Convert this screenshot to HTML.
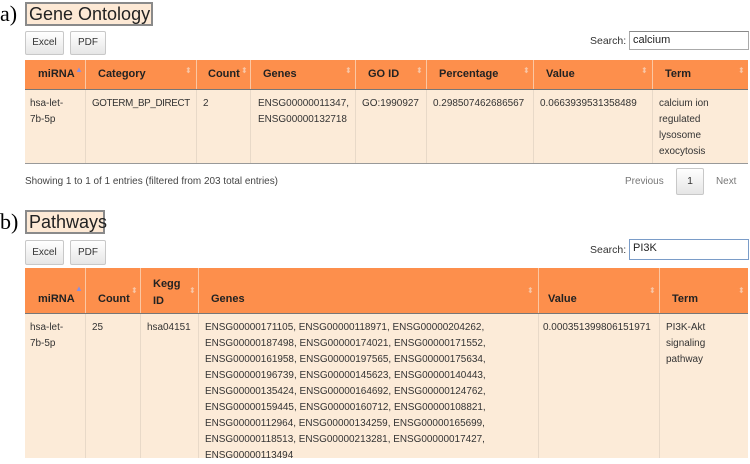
<!DOCTYPE html>
<html><head><meta charset="utf-8"><style>
*{margin:0;padding:0;box-sizing:border-box}
body{width:750px;height:458px;background:#fff;position:relative;overflow:hidden;font-family:"Liberation Sans",sans-serif;font-size:9.95px;color:#333}
.a{position:absolute;white-space:nowrap}
.lab{font-family:"Liberation Serif",serif;font-size:22px;color:#000}
.ttl{background:#fde9d5;border:2px solid #8a8a8a;font-size:18px;color:#222;line-height:20px;padding:0 2px}
.btn{background:linear-gradient(#fff,#e6e6e6);border:1px solid #c8c8c8;border-radius:2px;font-size:10px;text-align:center;color:#333}
.inp{border:1px solid #aaa;border-top-color:#888;background:#fff;font-size:11px;padding:2px 3px;color:#222}
.hd{background:#fd8f4c}
.th{position:absolute;font-weight:bold;color:#222;font-size:11px;white-space:nowrap}
.sep{position:absolute;width:1px;background:#fbc7a3}
.bd{background:#fcebd8}
.bsep{position:absolute;width:1px;background:#e8d9c8}
.td{position:absolute;line-height:16px;white-space:nowrap}
.sort{position:absolute;color:#f8c6a6;font-size:8px}
</style></head><body>
<div class="a lab" style="left:0;top:1px">a)</div>
<div class="a ttl" style="left:25px;top:2px;width:128px;height:24px">Gene Ontology</div>
<div class="a btn" style="left:25px;top:31px;width:39px;height:24px;line-height:22px">Excel</div>
<div class="a btn" style="left:70px;top:31px;width:36px;height:24px;line-height:22px">PDF</div>
<div class="a" style="left:590px;top:35px;font-size:10.5px">Search:</div>
<div class="a inp" style="left:629px;top:31px;width:120px;height:19px">calcium</div>

<div class="a hd" style="left:25px;top:60px;width:723px;height:29px"></div>
<div class="a bd" style="left:25px;top:89px;width:723px;height:75px;border-top:1px solid #777;border-bottom:1px solid #999"></div>
<div class="sep" style="left:85px;top:60px;height:29px"></div><div class="sep" style="left:196px;top:60px;height:29px"></div><div class="sep" style="left:250px;top:60px;height:29px"></div><div class="sep" style="left:355px;top:60px;height:29px"></div><div class="sep" style="left:426px;top:60px;height:29px"></div><div class="sep" style="left:533px;top:60px;height:29px"></div><div class="sep" style="left:652px;top:60px;height:29px"></div>
<div class="bsep" style="left:85px;top:90px;height:73px"></div><div class="bsep" style="left:196px;top:90px;height:73px"></div><div class="bsep" style="left:250px;top:90px;height:73px"></div><div class="bsep" style="left:355px;top:90px;height:73px"></div><div class="bsep" style="left:426px;top:90px;height:73px"></div><div class="bsep" style="left:533px;top:90px;height:73px"></div><div class="bsep" style="left:652px;top:90px;height:73px"></div>
<div class="th" style="left:38px;top:68px">miRNA</div><div class="sort" style="left:75px;top:65px;color:#8a8fe0">▲</div>
<div class="th" style="left:98px;top:68px">Category</div><div class="sort" style="left:185px;top:66px">⬍</div>
<div class="th" style="left:208px;top:68px">Count</div><div class="sort" style="left:241px;top:66px">⬍</div>
<div class="th" style="left:263px;top:68px">Genes</div><div class="sort" style="left:345px;top:66px">⬍</div>
<div class="th" style="left:368px;top:68px">GO ID</div><div class="sort" style="left:416px;top:66px">⬍</div>
<div class="th" style="left:439px;top:68px">Percentage</div><div class="sort" style="left:523px;top:66px">⬍</div>
<div class="th" style="left:546px;top:68px">Value</div><div class="sort" style="left:641px;top:66px">⬍</div>
<div class="th" style="left:665px;top:68px">Term</div><div class="sort" style="left:738px;top:66px">⬍</div>
<div class="td" style="left:30px;top:96px">hsa-let-<br>7b-5p</div>
<div class="td" style="left:92px;top:96px;font-size:9.8px;letter-spacing:-0.35px">GOTERM_BP_DIRECT</div>
<div class="td" style="left:203px;top:96px">2</div>
<div class="td" style="left:258px;top:96px">ENSG00000011347,<br>ENSG00000132718</div>
<div class="td" style="left:362px;top:96px">GO:1990927</div>
<div class="td" style="left:433px;top:96px">0.298507462686567</div>
<div class="td" style="left:540px;top:96px">0.0663939531358489</div>
<div class="td" style="left:659px;top:96px">calcium ion<br>regulated<br>lysosome<br>exocytosis</div>
<div class="a" style="left:25px;top:176px;color:#444">Showing 1 to 1 of 1 entries (filtered from 203 total entries)</div>
<div class="a" style="left:625px;top:176px;color:#777">Previous</div>
<div class="a btn" style="left:676px;top:168px;width:28px;height:27px;line-height:25px;font-size:10.5px">1</div>
<div class="a" style="left:716px;top:176px;color:#777">Next</div>

<div class="a lab" style="left:0;top:209px">b)</div>
<div class="a ttl" style="left:25px;top:210px;width:80px;height:24px">Pathways</div>
<div class="a btn" style="left:25px;top:240px;width:39px;height:25px;line-height:23px">Excel</div>
<div class="a btn" style="left:70px;top:240px;width:36px;height:25px;line-height:23px">PDF</div>
<div class="a" style="left:590px;top:244px;font-size:10.5px">Search:</div>
<div class="a inp" style="left:629px;top:239px;width:120px;height:21px;border-color:#7a9cc8">PI3K</div>

<div class="a hd" style="left:25px;top:268px;width:723px;height:45px"></div>
<div class="a bd" style="left:25px;top:313px;width:723px;height:145px;border-top:1px solid #777"></div>
<div class="sep" style="left:85px;top:268px;height:45px"></div><div class="sep" style="left:140px;top:268px;height:45px"></div><div class="sep" style="left:198px;top:268px;height:45px"></div><div class="sep" style="left:538px;top:268px;height:45px"></div><div class="sep" style="left:659px;top:268px;height:45px"></div>
<div class="bsep" style="left:85px;top:314px;height:144px"></div><div class="bsep" style="left:140px;top:314px;height:144px"></div><div class="bsep" style="left:198px;top:314px;height:144px"></div><div class="bsep" style="left:538px;top:314px;height:144px"></div><div class="bsep" style="left:659px;top:314px;height:144px"></div>
<div class="th" style="left:38px;top:293px">miRNA</div><div class="sort" style="left:75px;top:284px;color:#8a8fe0">▲</div>
<div class="th" style="left:98px;top:293px">Count</div><div class="sort" style="left:131px;top:286px">⬍</div>
<div class="th" style="left:153px;top:276px;line-height:17px">Kegg<br>ID</div><div class="sort" style="left:189px;top:286px">⬍</div>
<div class="th" style="left:211px;top:293px">Genes</div><div class="sort" style="left:527px;top:286px">⬍</div>
<div class="th" style="left:548px;top:293px">Value</div><div class="sort" style="left:649px;top:286px">⬍</div>
<div class="th" style="left:672px;top:293px">Term</div><div class="sort" style="left:738px;top:286px">⬍</div>
<div class="td" style="left:30px;top:320px">hsa-let-<br>7b-5p</div>
<div class="td" style="left:92px;top:320px">25</div>
<div class="td" style="left:147px;top:320px">hsa04151</div>
<div class="td" style="left:205px;top:320px">ENSG00000171105, ENSG00000118971, ENSG00000204262,<br>ENSG00000187498, ENSG00000174021, ENSG00000171552,<br>ENSG00000161958, ENSG00000197565, ENSG00000175634,<br>ENSG00000196739, ENSG00000145623, ENSG00000140443,<br>ENSG00000135424, ENSG00000164692, ENSG00000124762,<br>ENSG00000159445, ENSG00000160712, ENSG00000108821,<br>ENSG00000112964, ENSG00000134259, ENSG00000165699,<br>ENSG00000118513, ENSG00000213281, ENSG00000017427,<br>ENSG00000113494</div>
<div class="td" style="left:543px;top:320px">0.000351399806151971</div>
<div class="td" style="left:666px;top:320px">PI3K-Akt<br>signaling<br>pathway</div>
</body></html>
